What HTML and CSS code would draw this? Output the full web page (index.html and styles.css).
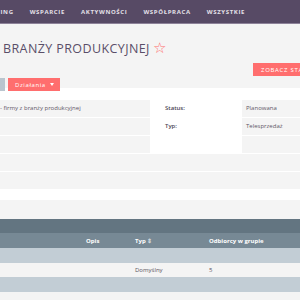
FILE: index.html
```html
<!DOCTYPE html>
<html lang="pl">
<head>
    <meta charset="UTF-8">
    <meta name="viewport" content="width=device-width, initial-scale=1.0">
    <title>Kampania</title>
    <link rel="stylesheet" href="styles.css">
</head>
<body>
    <nav class="topnav">
        <a class="nav-item">Marketing</a>
        <a class="nav-item">Wsparcie</a>
        <a class="nav-item">Aktywności</a>
        <a class="nav-item">Współpraca</a>
        <a class="nav-item">Wszystkie</a>
    </nav>

    <header class="page-head">
        <h1 class="page-title">Branży produkcyjnej <span class="star">&#9734;</span></h1>
        <div class="stats-row">
            <button class="btn btn-stats">Zobacz statystyki</button>
        </div>
        <div class="tools">
            <button class="btn btn-grey">&nbsp;</button>
            <button class="btn btn-red">Działania <span class="caret"></span></button>
        </div>
    </header>

    <section class="details">
        <div class="detail-grid">
            <div class="cell desc">- firmy z branży produkcyjnej</div>
            <div class="cell label">Status:</div>
            <div class="cell value">Planowana</div>

            <div class="cell desc"></div>
            <div class="cell label">Typ:</div>
            <div class="cell value">Telesprzedaż</div>

            <div class="cell desc"></div>
            <div class="cell label"></div>
            <div class="cell value"></div>

            <div class="cell desc"></div>
            <div class="cell"></div>
            <div class="cell value"></div>

            <div class="cell desc"></div>
            <div class="cell"></div>
            <div class="cell value"></div>
        </div>
    </section>

    <section class="groups">
        <div class="groups-title"></div>
        <div class="groups-bar"></div>
        <table class="groups-table">
            <thead>
                <tr>
                    <th class="col-name"></th>
                    <th class="col-desc">Opis</th>
                    <th class="col-type">Typ <span class="sort">&#8661;</span></th>
                    <th class="col-count">Odbiorcy w grupie</th>
                </tr>
            </thead>
            <tbody>
                <tr class="row-alt"><td></td><td></td><td></td><td></td></tr>
                <tr><td></td><td></td><td>Domyślny</td><td>5</td></tr>
                <tr class="row-alt"><td></td><td></td><td></td><td></td></tr>
                <tr><td></td><td></td><td></td><td></td></tr>
            </tbody>
        </table>
    </section>
</body>
</html>
```

FILE: styles.css
```css
:root {
    --purple: #574a65;
    --salmon: #ff6e6e;
    --page-bg: #f4f4f4;
    --slate: #637581;
    --slate-light: #778995;
    --row-blue: #c2cdd5;
    --text: #4e4a55;
}

* {
    margin: 0;
    padding: 0;
    box-sizing: border-box;
    font-family: 'Open Sans', 'Liberation Sans', sans-serif;
}

html, body {
    overflow: hidden;
}

body {
    width: 300px;
    background-color: var(--page-bg);
    color: var(--text);
}

.topnav {
    display: flex;
    height: 24px;
    margin-left: -36px;
    background-color: var(--purple);
    border-bottom: 1px solid #8d8299;
}

.nav-item {
    padding: 0 8px;
    font-size: 6px;
    font-weight: 700;
    letter-spacing: 0.65px;
    line-height: 24px;
    text-transform: uppercase;
    color: #e4e0e8;
    white-space: nowrap;
}

.page-head {
    height: 64px;
    padding-top: 15px;
}

.page-title {
    padding-left: 3px;
    font-size: 12.5px;
    font-weight: 400;
    line-height: 16px;
    letter-spacing: 0.4px;
    text-transform: uppercase;
    color: #5a4e68;
    white-space: nowrap;
}

.star {
    font-size: 15px;
    color: var(--salmon);
    letter-spacing: 0;
}

.stats-row {
    display: flex;
    justify-content: flex-end;
    margin-top: 6px;
    margin-right: -40px;
}

.btn {
    height: 13px;
    border: none;
    font-size: 6px;
    color: #fff;
    white-space: nowrap;
}

.btn-stats {
    width: 87px;
    padding-left: 8px;
    text-align: left;
    letter-spacing: 0.7px;
    text-transform: uppercase;
    background-color: var(--salmon);
}

.tools {
    display: flex;
    gap: 3px;
    margin-top: 2px;
}

.btn-grey {
    width: 5px;
    background-color: #b9c5ce;
}

.btn-red {
    display: flex;
    align-items: center;
    gap: 4px;
    padding: 0 6px 0 7px;
    letter-spacing: 0.6px;
    background-color: var(--salmon);
}

.caret {
    width: 0;
    height: 0;
    border-left: 2.5px solid transparent;
    border-right: 2.5px solid transparent;
    border-top: 3px solid #fff;
}

.details {
    background-color: #fff;
    padding-top: 12px;
    padding-bottom: 11px;
}

.detail-grid {
    display: grid;
    grid-template-columns: 150px 92px 80px;
    grid-auto-rows: 17px;
    row-gap: 1px;
    width: 322px;
}

.cell {
    font-size: 6px;
    line-height: 17px;
    background-color: var(--page-bg);
    color: #5f5767;
    white-space: nowrap;
}

.cell.label {
    padding-left: 15px;
    font-weight: 600;
    color: #4b4453;
    background-color: #fff;
}

.cell.value {
    padding-left: 4px;
}

.groups-title {
    height: 19px;
    background-color: var(--page-bg);
}

.groups-bar {
    height: 14px;
    background-color: var(--slate);
}

.groups-table {
    width: 330px;
    border-collapse: collapse;
}

.groups-table th {
    height: 15px;
    font-size: 6px;
    font-weight: 700;
    text-align: left;
    color: #fff;
    background-color: var(--slate-light);
    white-space: nowrap;
}

.col-name { width: 86px; }
.col-desc { width: 49px; }
.col-type { width: 74px; }

.sort {
    font-size: 6px;
    opacity: 0.7;
}

.groups-table td {
    height: 14px;
    font-size: 6px;
    color: #5a5462;
    background-color: var(--page-bg);
}

.groups-table .row-alt td {
    height: 15px;
    background-color: var(--row-blue);
}
```
